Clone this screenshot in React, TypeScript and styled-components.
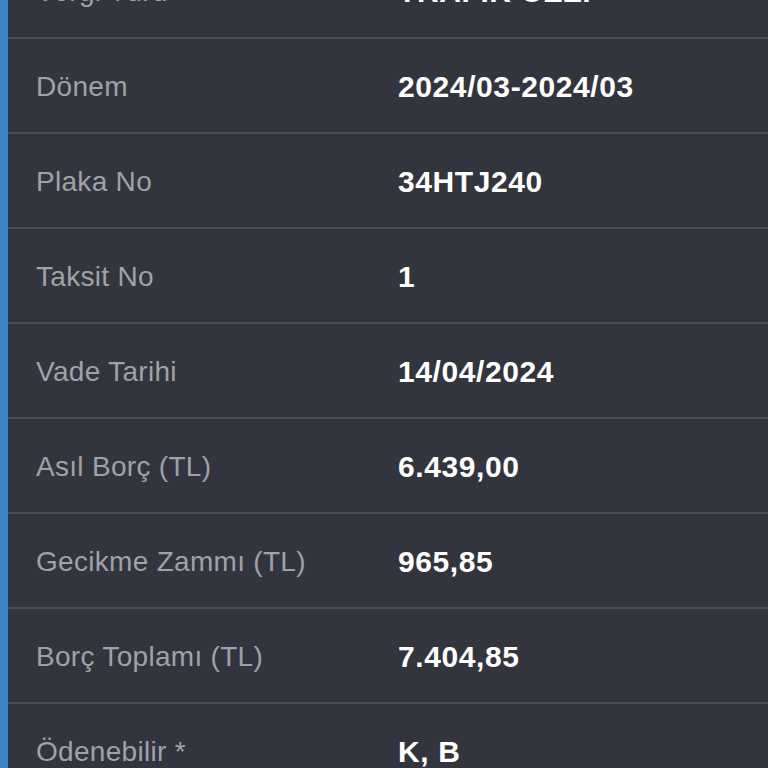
import React from "react";
import styled, { createGlobalStyle } from "styled-components";

const Global = createGlobalStyle`
  html, body {
    margin: 0;
    padding: 0;
    background: #32353d;
    overflow: hidden;
  }
  * { box-sizing: border-box; }
`;

const Panel = styled.div`
  border-left: 8px solid #3d85c6;
  background: #32353d;
  min-height: 100vh;
  font-family: "Liberation Sans", Arial, Helvetica, sans-serif;
`;

const List = styled.div`
  margin-top: -56px;
  display: flex;
  flex-direction: column;
`;

const Row = styled.div`
  display: grid;
  grid-template-columns: 362px 1fr;
  align-items: center;
  height: 95px;
  padding-left: 28px;
  padding-top: 3px;
  border-bottom: 2px solid #494d56;
`;

const Label = styled.div`
  color: #9ea2a9;
  font-size: 28px;
  letter-spacing: 0.3px;
  white-space: nowrap;
`;

const Value = styled.div`
  color: #ffffff;
  font-size: 30px;
  font-weight: 700;
  letter-spacing: 0.6px;
  white-space: nowrap;
`;

const rows: [string, string][] = [
  ["Vergi Türü", "TRAFİK CEZ."],
  ["Dönem", "2024/03-2024/03"],
  ["Plaka No", "34HTJ240"],
  ["Taksit No", "1"],
  ["Vade Tarihi", "14/04/2024"],
  ["Asıl Borç (TL)", "6.439,00"],
  ["Gecikme Zammı (TL)", "965,85"],
  ["Borç Toplamı (TL)", "7.404,85"],
  ["Ödenebilir *", "K, B"],
];

export default function App() {
  return (
    <>
      <Global />
      <Panel>
        <List>
          {rows.map(([l, v]) => (
            <Row key={l}>
              <Label>{l}</Label>
              <Value>{v}</Value>
            </Row>
          ))}
        </List>
      </Panel>
    </>
  );
}
